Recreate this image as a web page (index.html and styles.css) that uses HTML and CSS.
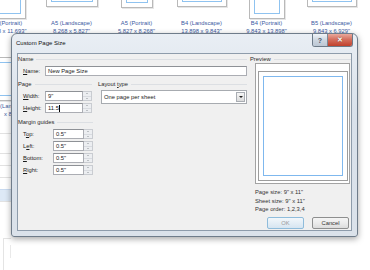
FILE: index.html
```html
<!DOCTYPE html>
<html lang="en">
<head>
    <meta charset="UTF-8">
    <title>Custom Page Size</title>
    <link rel="stylesheet" href="styles.css">
</head>
<body>
    <div class="desk">
        <div class="gallery row1">
            <div class="cell">
                <div class="thumb-area"><div class="thumb" style="width:38px;height:60px"><i></i></div></div>
                <p class="cap">A4 (Portrait)<br>8.268 x 11.693"</p>
            </div>
            <div class="cell">
                <div class="thumb-area"><div class="thumb" style="width:52px;height:48px"><i></i></div></div>
                <p class="cap">A5 (Landscape)<br>8.268 x 5.827"</p>
            </div>
            <div class="cell">
                <div class="thumb-area"><div class="thumb" style="width:32px;height:49px"><i></i></div></div>
                <p class="cap">A5 (Portrait)<br>5.827 x 8.268"</p>
            </div>
            <div class="cell">
                <div class="thumb-area"><div class="thumb" style="width:50px;height:48px"><i></i></div></div>
                <p class="cap">B4 (Landscape)<br>13.898 x 9.843"</p>
            </div>
            <div class="cell">
                <div class="thumb-area"><div class="thumb" style="width:36px;height:60px"><i></i></div></div>
                <p class="cap">B4 (Portrait)<br>9.843 x 13.898"</p>
            </div>
            <div class="cell">
                <div class="thumb-area"><div class="thumb" style="width:50px;height:48px"><i></i></div></div>
                <p class="cap">B5 (Landscape)<br>9.843 x 6.929"</p>
            </div>
        </div>
        <div class="side">
            <div class="gallery row2">
                <div class="cell">
                    <div class="thumb-area"><div class="thumb" style="width:52px;height:44px"><i></i></div></div>
                    <p class="cap">(Lan<br><span class="ind">x 8</span></p>
                </div>
            </div>
            <div class="strip">
                <div class="line tall"></div>
                <div class="line"></div>
                <div class="line"></div>
                <div class="line"></div>
                <div class="line picked"></div>
            </div>
            <div class="corner-thumb"><i></i></div>
        </div>
    </div>

    <div class="dialog">
        <div class="titlebar">
            <span class="title">Custom Page Size</span>
            <div class="caption-btns">
                <span class="help">?</span>
                <span class="close">&#x2715;</span>
            </div>
        </div>
        <div class="client">
            <div class="left">
                <div class="group-head"><span>Name</span></div>
                <div class="row name-row">
                    <label><u>N</u>ame:</label>
                    <div class="field">New Page Size</div>
                </div>
                <div class="cols">
                    <div class="page-col">
                        <div class="group-head"><span>Page</span></div>
                        <div class="row size-row">
                            <label><u>W</u>idth:</label>
                            <div class="field">9"</div>
                            <div class="spin"><b class="up"></b><b class="down"></b></div>
                        </div>
                        <div class="row size-row">
                            <label><u>H</u>eight:</label>
                            <div class="field">11.5<span class="caret"></span></div>
                            <div class="spin"><b class="up"></b><b class="down"></b></div>
                        </div>
                    </div>
                    <div class="layout-col">
                        <div class="group-head"><span>Layout <u>t</u>ype</span></div>
                        <div class="select">
                            <span>One page per sheet</span>
                            <div class="drop"><b></b></div>
                        </div>
                    </div>
                </div>
                <div class="group-head margin-head"><span>Margin guides</span></div>
                <div class="margins">
                    <div class="row margin-row">
                        <label>T<u>o</u>p:</label>
                        <div class="field">0.5"</div>
                        <div class="spin"><b class="up"></b><b class="down"></b></div>
                    </div>
                    <div class="row margin-row">
                        <label>L<u>e</u>ft:</label>
                        <div class="field">0.5"</div>
                        <div class="spin"><b class="up"></b><b class="down"></b></div>
                    </div>
                    <div class="row margin-row">
                        <label><u>B</u>ottom:</label>
                        <div class="field">0.5"</div>
                        <div class="spin"><b class="up"></b><b class="down"></b></div>
                    </div>
                    <div class="row margin-row">
                        <label><u>R</u>ight:</label>
                        <div class="field">0.5"</div>
                        <div class="spin"><b class="up"></b><b class="down"></b></div>
                    </div>
                </div>
            </div>
            <div class="right">
                <div class="group-head"><span>Preview</span></div>
                <div class="preview">
                    <div class="sheet"><div class="guides"></div></div>
                </div>
                <div class="info">
                    Page size: 9" x 11"<br>
                    Sheet size: 9" x 11"<br>
                    Page order: 1,2,3,4
                </div>
                <div class="buttons">
                    <button class="ok">OK</button>
                    <button>Cancel</button>
                </div>
            </div>
        </div>
    </div>
</body>
</html>
```

FILE: styles.css
```css
* {
    box-sizing: border-box;
}
body {
    margin: 0;
    width: 370px;
    height: 270px;
    overflow: hidden;
    position: relative;
    background-color: #fff;
    font-family: "Liberation Sans", Arial, sans-serif;
    font-size: 5.8px;
    color: #1b1b1b;
}

/* page gallery behind the dialog */
.gallery {
    display: flex;
    margin-left: -26px;
}
.row1 {
    margin-top: -41px;
}
.side {
    width: 11px;
    overflow: hidden;
}
.row2 {
    margin-top: 7px;
}
.cell {
    width: 65px;
    flex: none;
    display: flex;
    flex-direction: column;
    align-items: center;
}
.thumb-area {
    height: 60px;
    display: flex;
    align-items: flex-start;
    justify-content: center;
}
.row2 .thumb {
    margin-top: 15px;
}
.row2 .cap {
    align-self: flex-start;
    text-align: left;
    padding-left: 26px;
}
.ind {
    padding-left: 4px;
}
.thumb {
    border: 1px solid #b9b9b9;
    background-color: #fff;
    padding: 4px;
    box-shadow: 1px 1px 0 #e6e6e6;
}
.thumb i {
    display: block;
    width: 100%;
    height: 100%;
    border: 1px solid #8fc3f0;
}
.cap {
    margin: 0;
    padding-top: 1px;
    color: #3b5aa2;
    text-align: center;
    line-height: 7.5px;
    white-space: nowrap;
}
.strip {
    margin-top: 15px;
}
.strip .line {
    height: 12px;
    border-top: 1px solid #e2e2e2;
}
.strip .tall {
    height: 20px;
}
.strip .picked {
    height: 13px;
    background-color: #dde9f6;
    border-top-color: #c8daf0;
    border-bottom: 1px solid #e2e2e2;
}
.corner-thumb {
    margin: 36px 0 0 3px;
    width: 31px;
    height: 34px;
    border: 1px solid #e4e4e4;
    padding: 6px;
}
.corner-thumb i {
    display: block;
    width: 13px;
    height: 13px;
    border: 1px solid #e9e9e9;
}

/* dialog window */
.dialog {
    position: absolute;
    left: 11px;
    top: 33px;
    width: 347px;
    height: 204px;
    padding: 0 5px 5px;
    display: flex;
    flex-direction: column;
    border: 1px solid #6f7c8a;
    border-radius: 6px 6px 3px 3px;
    background: linear-gradient(#e9eef4, #d9e1ea 40%, #dbe2ea);
    box-shadow: 0 2px 6px rgba(0, 0, 0, 0.35);
}
.titlebar {
    height: 19px;
    margin: 0 -5px;
    padding: 0 4px;
    display: flex;
    justify-content: space-between;
    align-items: flex-start;
}
.title {
    margin-top: 5px;
    line-height: 8px;
    font-size: 6px;
    color: #111;
}
.caption-btns {
    display: flex;
    height: 13px;
    border: 1px solid #6d7a88;
    border-top: 0;
    border-radius: 0 0 3px 3px;
    overflow: hidden;
}
.caption-btns span {
    display: flex;
    align-items: center;
    justify-content: center;
    font-size: 7px;
    font-weight: bold;
}
.help {
    width: 15px;
    background: linear-gradient(#f1f4f8, #cdd6e0 50%, #bcc7d4);
    color: #4a5668;
    border-right: 1px solid #7d8896;
}
.close {
    width: 24px;
    background: linear-gradient(#e9a99c, #d4705f 45%, #c0402b);
    color: #fff;
    text-shadow: 0 0 1px #5a1a10;
}

.client {
    flex: 1;
    display: flex;
    gap: 3px;
    border: 1px solid #8e9cab;
    background-color: #f0f0f0;
}
.left {
    width: 229px;
    padding-top: 1px;
}
.right {
    flex: 1;
    padding-top: 1px;
}
.group-head {
    height: 8px;
    display: flex;
    align-items: center;
    gap: 3px;
    color: #2a2a2a;
    line-height: 8px;
}
.group-head::after {
    content: "";
    flex: 1;
    border-top: 1px solid #dcdfe3;
}
.row {
    display: flex;
    align-items: center;
    height: 10px;
    padding-left: 5px;
}
.row label {
    flex: none;
    width: 22px;
}
.field {
    height: 10px;
    border: 1px solid #abadb3;
    border-top-color: #8e9196;
    background-color: #fff;
    padding-left: 2px;
    line-height: 8px;
    display: flex;
    align-items: center;
}
.name-row {
    margin-top: 3px;
}
.name-row .field {
    flex: 1;
}
.cols {
    display: flex;
    margin-top: 4px;
}
.page-col {
    width: 80px;
    padding-right: 6px;
}
.size-row {
    margin-top: 2px;
}
.size-row:nth-child(2) {
    margin-top: 3px;
}
.size-row .field {
    width: 39px;
}
.caret {
    display: inline-block;
    width: 1px;
    height: 7px;
    background-color: #000;
}
.spin {
    width: 9px;
    height: 10px;
    display: flex;
    flex-direction: column;
    border: 1px solid #c9ccd1;
    border-left: 0;
    background-color: #eceef1;
}
.spin b {
    flex: 1;
    display: flex;
    align-items: center;
    justify-content: center;
}
.spin b::before {
    content: "";
    border-left: 1.5px solid transparent;
    border-right: 1.5px solid transparent;
}
.spin .up {
    border-bottom: 1px solid #d8dbe0;
}
.spin .up::before {
    border-bottom: 1.5px solid #8a8f96;
}
.spin .down::before {
    border-top: 1.5px solid #8a8f96;
}
.layout-col {
    flex: 1;
}
.select {
    margin: 2px 0 0 3px;
    height: 14px;
    display: flex;
    align-items: center;
    justify-content: space-between;
    border: 1px solid #a7abb0;
    background-color: #fff;
    padding: 0 1px 0 2px;
}
.drop {
    width: 9px;
    height: 10px;
    border: 1px solid #a9adb3;
    background: linear-gradient(#f6f6f6, #dcdcdc);
    display: flex;
    align-items: center;
    justify-content: center;
}
.drop b {
    border-left: 2px solid transparent;
    border-right: 2px solid transparent;
    border-top: 2px solid #222;
}
.margin-head {
    width: 75px;
    margin-top: 5px;
}
.margins {
    margin-top: 3px;
    display: flex;
    flex-direction: column;
    gap: 2px;
}
.margin-row label {
    width: 30px;
}
.margin-row .field {
    width: 31px;
}

.preview {
    margin: 0 0 0 5px;
    width: 95px;
    height: 121px;
    border: 1px solid #a3a3a3;
    background-color: #fff;
    padding: 7px 2px 2px;
}
.sheet {
    width: 90px;
    height: 110px;
    border: 1px solid #9d9d9d;
    padding: 4px;
}
.guides {
    width: 100%;
    height: 100%;
    border: 1px solid #7fb8ee;
}
.info {
    margin-top: 4px;
    padding-left: 5px;
    line-height: 8.5px;
    color: #333;
}
.buttons {
    margin-top: 3px;
    display: flex;
    justify-content: flex-end;
    gap: 8px;
    padding-right: 2px;
}
button {
    width: 37px;
    height: 12px;
    padding: 0;
    font-family: inherit;
    font-size: 5.8px;
    border-radius: 2px;
    border: 1px solid #8e8f8f;
    background: linear-gradient(#f5f5f5, #ebebeb 50%, #dcdcdc);
    color: #333;
}
.ok {
    border-color: #8fbcdb;
    background: linear-gradient(#f2f7fb, #e4eef6 50%, #d6e5f1);
    color: #9a9a9a;
}
```
